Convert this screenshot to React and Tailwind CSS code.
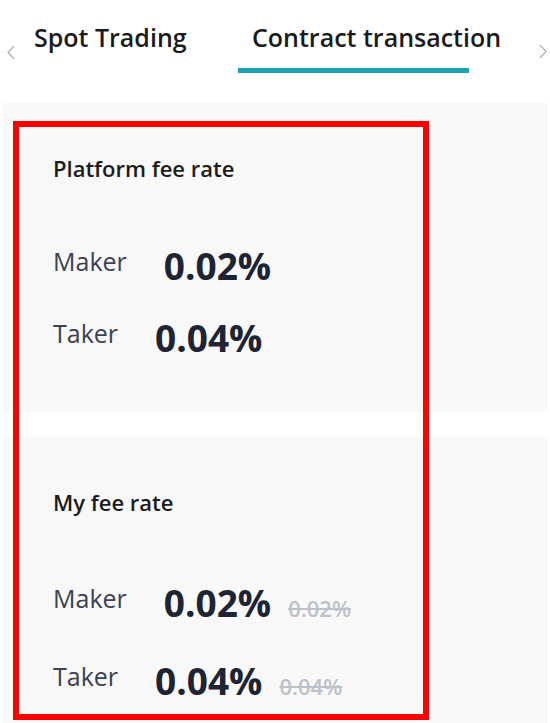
const Chevron = ({ dir }) => (
  <svg width="8" height="15" viewBox="0 0 8 15" fill="none">
    <path
      d={dir === 'left' ? 'M7 1 L1 7.5 L7 14' : 'M1 1 L7 7.5 L1 14'}
      stroke="#b4b4b4"
      strokeWidth="1.3"
    />
  </svg>
)

const FeeRow = ({ label, value, old, gap }) => (
  <div className={`flex items-start ${gap}`}>
    <span className="text-[25px] leading-[34px] text-[#3a4252]">{label}</span>
    <div className="ml-[37px] flex items-baseline">
      <span className="text-[37px] leading-[44px] font-bold text-[#1d2433]">{value}</span>
      {old && (
        <span className="ml-[17px] text-[22px] font-semibold text-[#bcc2ca] line-through">{old}</span>
      )}
    </div>
  </div>
)

const FeePanel = ({ title, rows, height }) => (
  <div className={`ml-[3px] w-[545px] bg-[#f8f8f8] pl-[50px] pt-[50px] ${height}`}>
    <h3 className="text-[22px] leading-[30px] font-semibold text-[#1c1c1c]">{title}</h3>
    {rows}
  </div>
)

export default function App() {
  return (
    <div
      className="relative h-[723px] w-[550px] overflow-hidden bg-white"
      style={{ fontFamily: '"Open Sans", "Noto Sans", sans-serif' }}
    >
      <div className="flex h-[103px] items-start pt-[20px]">
        <div className="w-[34px] pl-[7px] pt-[25px]">
          <Chevron dir="left" />
        </div>
        <div className="w-[204px] text-[25px] leading-[34px] font-semibold text-[#1b1b1b]">Spot Trading</div>
        <div className="flex flex-col">
          <span className="pl-[14px] text-[25px] leading-[34px] font-semibold text-[#1b1b1b] whitespace-nowrap">
            Contract transaction
          </span>
          <div className="mt-[14px] h-[5px] w-[231px] bg-[#1fa2b2]" />
        </div>
        <div className="ml-auto mr-[3px] pt-[24px]">
          <Chevron dir="right" />
        </div>
      </div>

      <FeePanel
        title="Platform fee rate"
        height="h-[309px]"
        rows={
          <>
            <FeeRow label="Maker" value="0.02%" gap="mt-[61px]" />
            <FeeRow label="Taker" value="0.04%" gap="mt-[28px]" />
          </>
        }
      />
      <div className="h-[25px]" />
      <FeePanel
        title="My fee rate"
        height="h-[320px]"
        rows={
          <>
            <FeeRow label="Maker" value="0.02%" old="0.02%" gap="mt-[64px]" />
            <FeeRow label="Taker" value="0.04%" old="0.04%" gap="mt-[34px]" />
          </>
        }
      />

      <div className="pointer-events-none absolute left-[13px] top-[121px] h-[599px] w-[416px] border-[6px] border-[#ff0000]" />
    </div>
  )
}
